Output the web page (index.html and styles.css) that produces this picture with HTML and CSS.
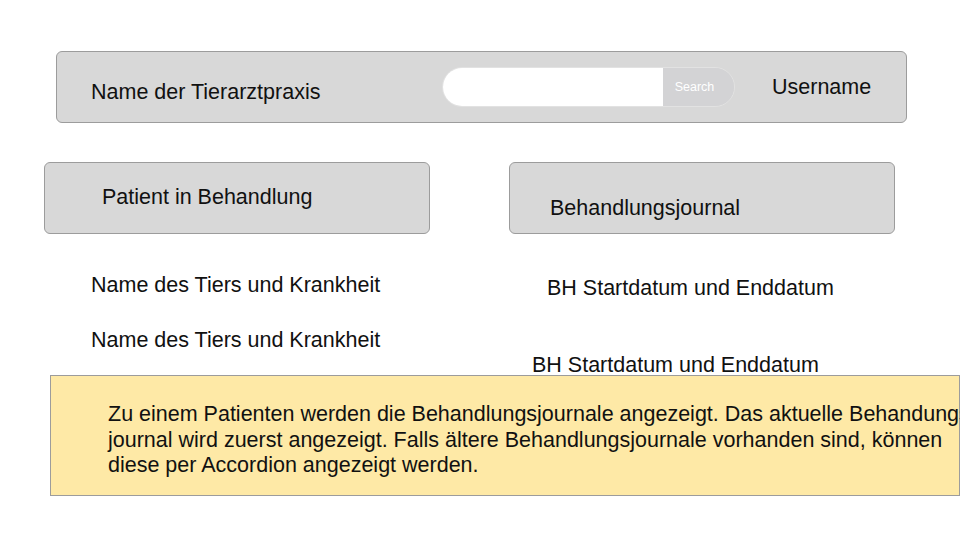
FILE: index.html
```html
<!DOCTYPE html>
<html lang="de">
<head>
    <meta charset="UTF-8">
    <meta name="viewport" content="width=device-width, initial-scale=1.0">
    <title>Tierarztpraxis - Behandlung</title>
    <link rel="stylesheet" href="styles.css">
</head>
<body>
    <div class="header">
        <div class="brand">Name der Tierarztpraxis</div>
        <div class="search">
            <input class="search-input" type="text">
            <button class="search-button">Search</button>
        </div>
        <div class="username">Username</div>
    </div>

    <div class="columns">
        <div class="column">
            <div class="panel panel-patient">Patient in Behandlung</div>
            <div class="item item-patient-1">Name des Tiers und Krankheit</div>
            <div class="item item-patient-2">Name des Tiers und Krankheit</div>
        </div>
        <div class="column">
            <div class="panel panel-journal">Behandlungsjournal</div>
            <div class="item item-journal-1">BH Startdatum und Enddatum</div>
            <div class="item item-journal-2">BH Startdatum und Enddatum</div>
        </div>
    </div>

    <div class="note">
        Zu einem Patienten werden die Behandlungsjournale angezeigt. Das aktuelle Behandungsjournal<br>
        journal wird zuerst angezeigt. Falls ältere Behandlungsjournale vorhanden sind, können<br>
        diese per Accordion angezeigt werden.
    </div>
</body>
</html>
```

FILE: styles.css
```css
body {
    margin: 0;
    font-family: "Liberation Sans", Arial, sans-serif;
    font-size: 21.5px;
    line-height: 25px;
    color: #111;
    background: #fff;
    width: 960px;
    height: 540px;
    overflow: hidden;
}

.header {
    display: flex;
    align-items: flex-start;
    box-sizing: border-box;
    width: 851px;
    height: 72px;
    margin: 51px 0 0 56px;
    background: #d8d8d8;
    border: 1px solid #9c9c9c;
    border-radius: 6px;
}

.brand {
    box-sizing: border-box;
    width: 385px;
    padding-left: 34px;
    margin-top: 28px;
    white-space: nowrap;
}

.search {
    display: flex;
    box-sizing: border-box;
    width: 293px;
    height: 40px;
    margin-top: 15px;
    border: 1px solid #e2e2e2;
    border-radius: 20px;
    overflow: hidden;
}

.search-input {
    flex: 0 0 220px;
    box-sizing: border-box;
    width: 220px;
    min-width: 0;
    border: none;
    margin: 0;
    padding: 0 16px;
    background: #fff;
    outline: none;
}

.search-button {
    flex: 1;
    border: none;
    margin: 0;
    padding: 0 8px 0 0;
    background: #d3d3d5;
    color: #fff;
    font-family: "Liberation Sans", Arial, sans-serif;
    font-size: 12.5px;
}

.username {
    margin: 23px 0 0 37px;
    white-space: nowrap;
}

.columns {
    display: grid;
    grid-template-columns: 386px 386px;
    gap: 79px;
    height: 213px;
    margin: 39px 0 0 44px;
}

.panel {
    box-sizing: border-box;
    height: 72px;
    background: #d8d8d8;
    border: 1px solid #9c9c9c;
    border-radius: 6px;
    white-space: nowrap;
}

.panel-patient {
    padding: 22px 0 0 57px;
}

.panel-journal {
    padding: 33px 0 0 40px;
}

.item {
    white-space: nowrap;
}

.item-patient-1 {
    margin: 39px 0 0 47px;
}

.item-patient-2 {
    margin: 30px 0 0 47px;
}

.item-journal-1 {
    margin: 42px 0 0 38px;
}

.item-journal-2 {
    margin: 52px 0 0 23px;
}

.note {
    box-sizing: border-box;
    width: 910px;
    height: 121px;
    margin: 0 0 0 50px;
    padding: 26px 0 0 57px;
    background: #fee9a6;
    border: 1px solid #9c9c9c;
    line-height: 25.5px;
    white-space: nowrap;
}
```
